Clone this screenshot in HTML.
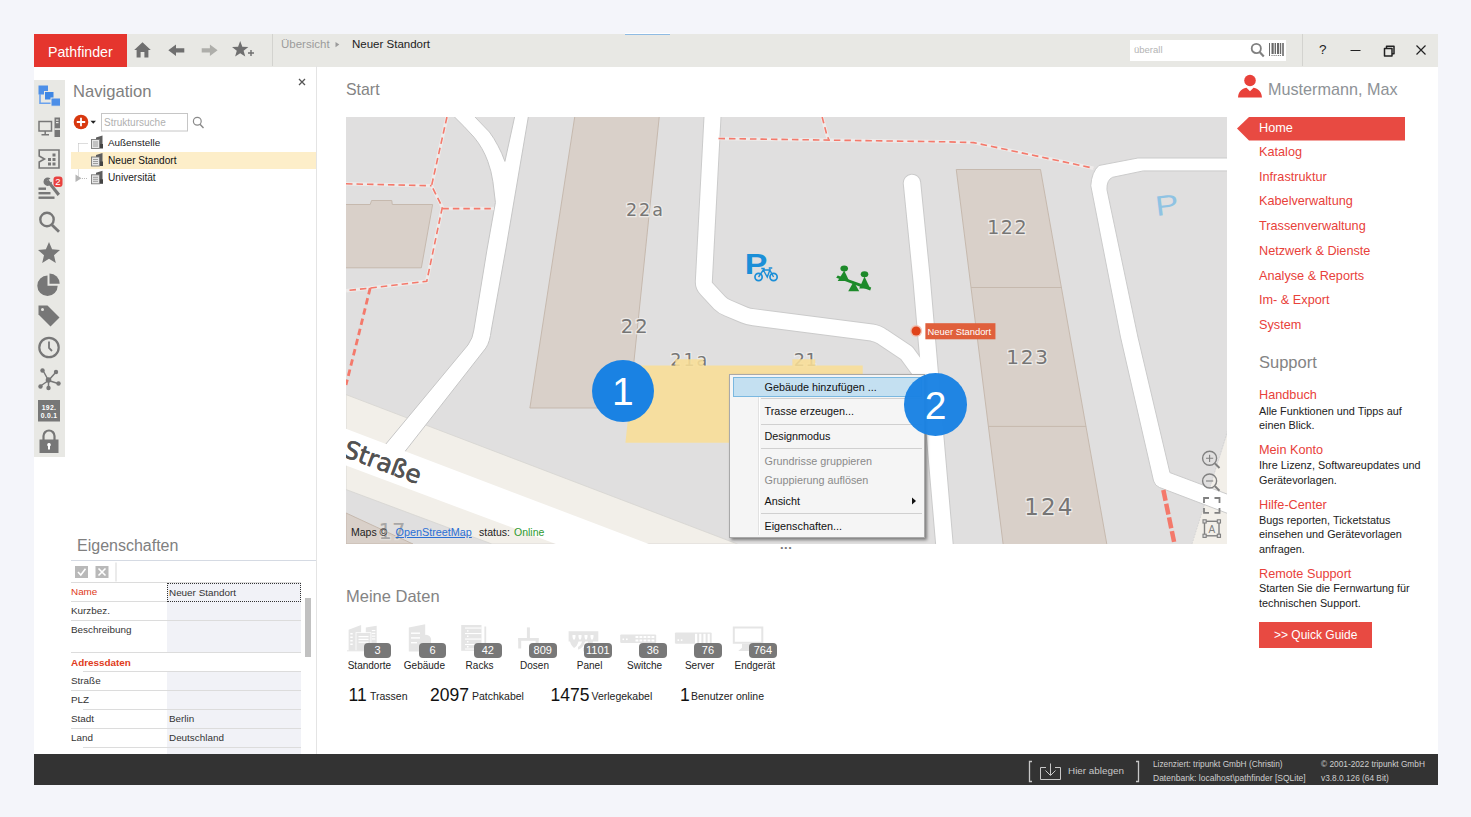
<!DOCTYPE html>
<html lang="de">
<head>
<meta charset="utf-8">
<title>Pathfinder</title>
<style>
*{box-sizing:border-box;margin:0;padding:0}
html,body{width:1471px;height:817px;overflow:hidden;background:#f4f5fa;font-family:"Liberation Sans",sans-serif;color:#222}
.a{position:absolute}
.t{position:absolute;white-space:nowrap;line-height:1}
#win{position:absolute;left:34px;top:34px;width:1404px;height:751px;background:#fff}
#titlebar{position:absolute;left:34px;top:34px;width:1404px;height:32.600px;background:#e8e8e4}
#brand{position:absolute;left:34px;top:34px;width:92.500px;height:32.600px;background:#e5352e}
#strip{position:absolute;left:34px;top:80px;width:31px;height:377px;background:#e8e8e4}
#status{position:absolute;left:34px;top:754px;width:1404px;height:31px;background:#333}
.h1{font-size:18px;color:#6a6a6a;font-weight:400}
.red{color:#e8413a}
.mi{font-size:12.700px;color:#e8413a}
.sd{font-size:10.850px;color:#222;line-height:14.5px;white-space:nowrap}
.pl{font-size:11px;color:#333}
.rowline{position:absolute;height:1px;background:#dcdcdc}
.cm{font-size:10.800px;color:#111}
.cmd{font-size:10.800px;color:#8a8a8a}
.sep{position:absolute;height:1px;background:#d0d0d0;left:31px;width:161px}
.lbl{font-size:10px;color:#222;text-align:center;width:60px}
.badge{position:absolute;height:15px;width:27.500px;border-radius:4px;background:#787878;color:#fff;font-size:11px;text-align:center;line-height:15px}
.st{font-size:10px;color:#cfcfcf}
</style>
</head>
<body>
<div id="win"></div>
<div id="titlebar"></div>
<div id="brand"></div>
<div class="a" style="left:625px;top:33px;width:44.500px;height:1px;background:#fff"></div>
<div class="a" style="left:625px;top:34px;width:44.500px;height:1px;background:#8fbbe3"></div>
<div class="t" style="left:48px;top:44.800px;font-size:14.200px;color:#fff">Pathfinder</div>

<svg class="a" style="left:126px;top:34px" width="320" height="32" viewBox="0 0 320 32">
<g fill="#6f6f6f">
<path d="M16.5 8.2 L8.2 16 L10.6 16 L10.6 23.5 L14.6 23.5 L14.6 18 L18.4 18 L18.4 23.5 L22.4 23.5 L22.4 16 L24.8 16 Z"/>
<path d="M42.3 16.3 L50 10.6 L50 14.2 L58.3 14.2 L58.3 18.6 L50 18.6 L50 22 Z"/>
<path d="M114.20 7.00 L116.32 12.69 L122.38 12.94 L117.62 16.71 L119.25 22.56 L114.20 19.20 L109.15 22.56 L110.78 16.71 L106.02 12.94 L112.08 12.69 Z"/>
<path d="M124.300 16 h1.400 v2.300 h2.300 v1.400 h-2.300 v2.300 h-1.400 v-2.300 h-2.300 v-1.400 h2.300z"/>
</g>
<path fill="#aeaeaa" d="M91.6 16.3 L83.9 10.6 L83.9 14.2 L75.7 14.2 L75.7 18.6 L83.9 18.6 L83.9 22 Z"/>
<rect x="146" y="0" width="1" height="32" fill="#d3d3cf"/>
<path fill="#9a9a9a" d="M209.5 8 L213.3 10.6 L209.5 13.2Z"/>
</svg>
<div class="t" style="left:281px;top:39px;font-size:11.5px;color:#9b9b9b">Übersicht</div>
<div class="t" style="left:352px;top:39px;font-size:11.5px;color:#222">Neuer Standort</div>
<div class="a" style="left:1130px;top:40px;width:156px;height:20.500px;background:#fff"></div>
<div class="t" style="left:1134px;top:45px;font-size:9.5px;color:#b4b4b4">überall</div>
<svg class="a" style="left:1250px;top:38px" width="40" height="24" viewBox="0 0 40 24">
<circle cx="6.300" cy="10.500" r="4.600" fill="none" stroke="#808080" stroke-width="1.800"/>
<path d="M9.600 14 L13.800 18.400" stroke="#808080" stroke-width="2.200" fill="none"/>
<g fill="#6a6a6a"><rect x="19" y="5" width="1" height="13"/><rect x="21.5" y="5" width="2.2" height="11"/><rect x="24.6" y="5" width="1.4" height="11"/><rect x="27" y="5" width="2.2" height="11"/><rect x="30" y="5" width="1.2" height="11"/><rect x="32.2" y="5" width="1.6" height="13"/>
<rect x="21.5" y="17" width="1" height="1"/><rect x="23.6" y="17" width="1" height="1"/><rect x="25.6" y="17" width="1" height="1"/><rect x="27.8" y="17" width="1" height="1"/><rect x="29.8" y="17" width="1" height="1"/></g>
</svg>
<div class="a" style="left:1302px;top:34px;width:1px;height:32px;background:#d3d3cf"></div>
<div class="t" style="left:1319px;top:43px;font-size:13.500px;color:#222">?</div>
<svg class="a" style="left:1340px;top:38px" width="96" height="24" viewBox="0 0 96 24">
<path d="M10.5 12.5 H20.5" stroke="#222" stroke-width="1" fill="none"/>
<path d="M44.5 10.5 h7.5 v7.5 h-7.5z M46.5 10.3 v-2 h7.5 v7.5 h-2" stroke="#222" stroke-width="1.5" fill="none" stroke-linejoin="round"/>
<path d="M76.5 7.5 L85.5 16.5 M85.5 7.5 L76.5 16.5" stroke="#222" stroke-width="1.2" fill="none"/>
</svg>


<!-- LEFT-STRIP -->
<div id="strip"></div>
<svg class="a" style="left:34px;top:80px" width="30" height="377" viewBox="0 0 30 377">
<!-- blue structure icon  center y=15.5 -->
<g>
<rect x="4.5" y="5.5" width="9.5" height="9" fill="#4d8fe8"/>
<path d="M6 14 V23.3 H18" stroke="#6aa2ee" stroke-width="1.6" fill="none"/>
<rect x="10.5" y="11.5" width="9.5" height="8.5" fill="#3e86e4" stroke="#e8e8e4" stroke-width="1"/>
<rect x="17" y="18" width="9.5" height="8.2" fill="#4d8fe8" stroke="#e8e8e4" stroke-width="1"/>
</g>
<!-- monitor + tower center y=47 -->
<g fill="none" stroke="#777" stroke-width="1.5">
<rect x="5" y="41.5" width="12.5" height="9.5"/>
<path d="M11.2 51 V54 M7.5 54.8 H15"/>
</g>
<rect x="20.5" y="37.5" width="5.5" height="19.5" fill="#777"/>
<rect x="22" y="39.5" width="2.5" height="1.2" fill="#e8e8e4"/><rect x="22" y="42" width="2.5" height="1.2" fill="#e8e8e4"/><rect x="20.5" y="48.3" width="5.5" height="1.6" fill="#e8e8e4"/>
<!-- floor plan center y=78.5 -->
<path d="M5.2 70 H25 V88 H5.2 V82 L10.5 79 L5.2 76 Z" fill="none" stroke="#777" stroke-width="1.6"/>
<g fill="#777"><rect x="18.5" y="73.5" width="3" height="3"/><rect x="14" y="78" width="3" height="3"/><rect x="18.5" y="78" width="3" height="3"/><rect x="14" y="82.500" width="3" height="3"/><rect x="18.5" y="82.5" width="3" height="3"/></g>
<!-- tools center y=110 -->
<g fill="#777">
<rect x="4.5" y="107.5" width="7.5" height="2.4"/><rect x="4.500" y="112" width="12" height="2.4"/><rect x="4.500" y="116.5" width="16" height="2.4"/>
<path d="M12.3 101.5 L14.6 99.8 L26 113.8 L23.6 116 Z"/>
<path d="M9.5 101.5 a4.2 4.2 0 0 1 7 -3 l-3.3 2.3 l1.6 2.6 l3.300 -1.6 a4.2 4.2 0 0 1 -8.6 -0.300z"/>
</g>
<rect x="19.500" y="96.500" width="9" height="10.500" rx="3" fill="#e8413f"/>
<text x="24" y="105" font-family="Liberation Sans,sans-serif" font-size="9.500" fill="#fff" text-anchor="middle">2</text>
<!-- search center y=141.5 -->
<circle cx="13" cy="139.5" r="6.700" fill="none" stroke="#777" stroke-width="2.4"/>
<path d="M17.800 144.700 L25 151.700" stroke="#777" stroke-width="2.800" fill="none"/>
<!-- star center y=173 -->
<path fill="#777" d="M15 162 L18.100 169.300 L26 170 L20 175.200 L21.800 183 L15 178.800 L8.200 183 L10 175.200 L4 170 L11.900 169.300 Z"/>
<!-- pie center y=204 -->
<path fill="#777" d="M13.500 195.500 V205.700 H23.700 A10.200 10.200 0 1 1 13.500 195.500 Z"/>
<path fill="#777" d="M15.500 193.500 A10.200 10.200 0 0 1 25.700 203.700 H15.500 Z"/>
<!-- tag center y=235.5 -->
<path fill="#777" d="M4.500 225.500 H13.500 L25.500 237.500 L16.500 246.500 L4.500 234.500 Z"/>
<circle cx="8.500" cy="229.500" r="1.500" fill="#e8e8e4"/>
<!-- clock center y=267.500 -->
<circle cx="15" cy="267.500" r="9.700" fill="none" stroke="#777" stroke-width="2.200"/>
<path d="M15 261.500 V268 L18 271" stroke="#777" stroke-width="1.800" fill="none"/>
<!-- network center y=299 -->
<g stroke="#777" stroke-width="1.500" fill="none"><path d="M14.500 300.500 L9 290.500 M14.500 300.500 L22 292 M14.500 300.500 L24 303.500 M14.500 300.500 L14.500 307.500 M14.500 300.500 L6.500 306"/></g>
<g fill="#777"><circle cx="14.500" cy="300" r="2.800"/><circle cx="8.500" cy="290.500" r="2.200"/><circle cx="22" cy="292" r="2.200"/><circle cx="24.500" cy="303.500" r="2.200"/><circle cx="14.500" cy="308" r="2.200"/><circle cx="6.500" cy="306.500" r="2.200"/></g>
<!-- ip center y=330.500 -->
<rect x="4" y="320" width="22" height="21.500" fill="#777"/>
<text x="15" y="329.500" font-family="Liberation Sans,sans-serif" font-size="6.800" font-weight="bold" fill="#fff" text-anchor="middle" letter-spacing="0.300">192.</text>
<text x="15" y="338" font-family="Liberation Sans,sans-serif" font-size="6.800" font-weight="bold" fill="#fff" text-anchor="middle" letter-spacing="0.300">0.0.1</text>
<!-- lock center y=361.500 -->
<path d="M9.500 360 V356 A5.500 5.500 0 0 1 20.500 356 V360" stroke="#777" stroke-width="2.200" fill="none"/>
<rect x="5.500" y="359.500" width="19" height="13.500" fill="#777"/>
<path d="M15 363 a1.800 1.800 0 0 1 1 3.300 v3.200 h-2 v-3.200 a1.800 1.800 0 0 1 1 -3.300z" fill="#fff"/>
</svg>

<div class="t h1" style="left:73px;top:83.500px;font-size:16.600px;font-weight:300;color:#808080">Navigation</div>
<svg class="a" style="left:297px;top:77px" width="10" height="10" viewBox="0 0 10 10"><path d="M2 2 L8 8 M8 2 L2 8" stroke="#555" stroke-width="1.300" fill="none"/></svg>
<div class="a" style="left:316px;top:66px;width:1px;height:689px;background:#e4e4e4"></div>
<svg class="a" style="left:70px;top:110px" width="140" height="80" viewBox="0 0 140 80">
<circle cx="11" cy="12" r="7.300" fill="#d8380f"/>
<path d="M11 7.800 V16.200 M6.800 12 H15.200" stroke="#fff" stroke-width="1.800"/>
<path d="M20.500 10.800 H26 L23.250 13.800 Z" fill="#222"/>
<rect x="31.500" y="3.500" width="86" height="17.500" fill="#fff" stroke="#c6c6c6"/>
<circle cx="127.300" cy="11.300" r="3.900" fill="none" stroke="#8a8a8a" stroke-width="1.200"/>
<path d="M130 14.200 L133.500 18" stroke="#8a8a8a" stroke-width="1.400"/>
<g stroke="#bbb" stroke-width="1" stroke-dasharray="1 1" fill="none"><path d="M8.500 33.500 V68 M8.500 33.500 H18 M8.500 50.500 H18 M12 68.500 H18"/></g>
<path d="M5.500 64.500 L11.500 68.300 L5.500 72 Z" fill="#b5b5b5"/>
</svg>
<div class="t" style="left:104px;top:118px;font-size:10px;color:#b0b0b0">Struktursuche</div>
<div class="a" style="left:71px;top:152px;width:245px;height:17px;background:#fdeec9"></div>
<svg class="a" style="left:90px;top:134px" width="16" height="56" viewBox="0 0 16 56">
<g id="bld"><path d="M6 3.500 L12.500 1.500 V13.500 H6 Z" fill="#5e5e5e"/><rect x="1.500" y="5.500" width="8" height="9" fill="#e6e6e6" stroke="#7a7a7a" stroke-width="0.900"/><path d="M3 8 H8 M3 10 H8 M3 12 H8" stroke="#8a8a8a" stroke-width="0.800"/><rect x="10" y="10" width="3" height="4.500" fill="#444"/></g>
<use href="#bld" y="17.500"/><use href="#bld" y="35.300"/>
</svg>
<div class="t" style="left:108px;top:138px;font-size:9.900px;color:#222">Außenstelle</div>
<div class="t" style="left:108px;top:155.500px;font-size:10.100px;color:#111">Neuer Standort</div>
<div class="t" style="left:108px;top:173px;font-size:10.100px;color:#222">Universität</div>


<div class="t h1" style="left:77px;top:538px;font-size:16px;font-weight:300;color:#808080">Eigenschaften</div>
<div class="a" style="left:71px;top:560px;width:245px;height:1px;background:#d5dae3"></div>
<svg class="a" style="left:70px;top:562px" width="50" height="20" viewBox="0 0 50 20">
<rect x="5" y="4" width="13" height="12" fill="#b9b9b9"/><path d="M8 10 L10.800 13 L15.500 6.800" stroke="#fff" stroke-width="1.600" fill="none"/>
<rect x="25.500" y="4" width="13" height="12" fill="#b9b9b9"/><path d="M28.500 6.500 L35.500 13.500 M35.500 6.500 L28.500 13.500" stroke="#fff" stroke-width="1.600" fill="none"/>
<rect x="45.500" y="0.500" width="1" height="19" fill="#d8d8d8"/>
</svg>
<div class="a" style="left:167px;top:583px;width:134px;height:172px;background:#f1f2f7"></div>
<div class="a" style="left:167px;top:653px;width:134px;height:19px;background:#fff"></div>
<div class="rowline" style="left:71px;top:582px;width:230px"></div>
<div class="rowline" style="left:71px;top:601px;width:230px"></div>
<div class="rowline" style="left:71px;top:620px;width:230px"></div>
<div class="rowline" style="left:71px;top:652px;width:230px"></div>
<div class="rowline" style="left:83px;top:671px;width:218px"></div>
<div class="rowline" style="left:71px;top:690px;width:230px"></div>
<div class="rowline" style="left:83px;top:709px;width:218px"></div>
<div class="rowline" style="left:71px;top:728px;width:230px"></div>
<div class="rowline" style="left:83px;top:747px;width:218px"></div>
<div class="a" style="left:167px;top:583px;width:134px;height:19px;border:1px dotted #333;background:#f1f2f7"></div>
<div class="t pl" style="left:71px;top:587px;color:#e03a20;font-size:9.900px">Name</div>
<div class="t pl" style="left:169px;top:587.500px;font-size:9.900px">Neuer Standort</div>
<div class="t pl" style="left:71px;top:606px;font-size:9.900px">Kurzbez.</div>
<div class="t pl" style="left:71px;top:625px;font-size:9.900px">Beschreibung</div>
<div class="t pl" style="left:71px;top:657.500px;color:#e03a20;font-weight:bold;font-size:9.900px">Adressdaten</div>
<div class="t pl" style="left:71px;top:676px;font-size:9.900px">Straße</div>
<div class="t pl" style="left:71px;top:695px;font-size:9.900px">PLZ</div>
<div class="t pl" style="left:71px;top:713.500px;font-size:9.900px">Stadt</div>
<div class="t pl" style="left:169px;top:714px;font-size:9.900px">Berlin</div>
<div class="t pl" style="left:71px;top:732.500px;font-size:9.900px">Land</div>
<div class="t pl" style="left:169px;top:733px;font-size:9.900px">Deutschland</div>
<div class="a" style="left:305px;top:598px;width:6px;height:59px;background:#c1c1c1"></div>


<div class="t h1" style="left:346px;top:82px;font-size:15.900px;color:#848484">Start</div>
<div class="t h1" style="left:346px;top:588px;font-size:16.500px;color:#848484">Meine Daten</div>
<div class="t" style="left:780px;top:538px;font-size:13px;color:#777;letter-spacing:0.500px;font-weight:bold">...</div>


<svg class="a" id="map" style="left:345.500px;top:116.800px" width="881.500" height="427" preserveAspectRatio="none" viewBox="0 0 882 427">
<defs><clipPath id="mc"><rect x="0" y="0" width="882" height="427"/></clipPath></defs>
<g clip-path="url(#mc)">
<rect x="0" y="0" width="882" height="427" fill="#e0dfdf"/>
<!-- street band -->
<polygon points="0,277.600 391.600,427 146,427 0,372.500" fill="#f2efe9" stroke="#d6d4d0" stroke-width="0.800"/>
<polygon points="883,313.700 846.500,427 883,427" fill="#f2efe9"/>
<path d="M882,313.700 L846.500,427" stroke="#cfcfcf" stroke-width="0.800" stroke-dasharray="1.500 1.500" fill="none"/>
<polygon points="0,396 67,427 0,427" fill="#d9d0c9" stroke="#c6b9ae" stroke-width="1"/>
<g id="roads-casing" fill="none" stroke="#cbcbcb" stroke-linejoin="round" stroke-linecap="butt">
<path d="M366.800,-2 L358,165 Q358,169 361,172 L374,186 Q377,189 382,191 L398.500,198 Q402,199.500 408,200.300 L526,215.500 Q532,216.500 537,220 L561,236 L580,262" stroke-width="18"/>
<path d="M566.300,66 L576,163 L599,430" stroke-width="18.500" stroke-linecap="round"/>
</g>
<g id="roads" fill="none" stroke="#fff" stroke-linejoin="round" stroke-linecap="butt">
<path d="M366.800,-2 L358,165 Q358,169 361,172 L374,186 Q377,189 382,191 L398.500,198 Q402,199.500 408,200.300 L526,215.500 Q532,216.500 537,220 L561,236 L580,262" stroke-width="16"/>
<path d="M566.300,66 L576,163 L599,430" stroke-width="16.500" stroke-linecap="round"/>
</g>
<path d="M883,41 L792.400,41 L753.300,48.500 Q746,55 745.200,68.700 L774.900,220 L808,364 Q809.500,369 814,370.500 L883,396.800 L883,377.600 L824.400,355.600 L792.400,220 L761.400,72.700 Q761,63 767,60.300 L797.800,53.900 L883,53.900 Z" fill="#fff" stroke="#cbcbcb" stroke-width="1" stroke-linejoin="round"/>
<path d="M107.600,-1 Q118,9 128.100,20.200 Q137,31 141.800,44.200 Q145.500,54 147,64.800 L149.500,85.500 L141,133 L127.900,213 Q127,221 122,228 L30.200,338.700 L50.500,345.400 L140,231 Q144,225 145.400,213 L159.800,133 L182.600,-1 L168.900,-1 L159,44.400 Q156,36 152.100,28.800 Q148,21 143.500,15 L128.100,-1 Z" fill="#fff" stroke="#c6c6c6" stroke-width="1" stroke-linejoin="round"/>
<polygon points="0,311.800 303,427 210,427 0,348.500" fill="#fff"/>
<!-- buildings -->
<g fill="#d9d0c9" stroke="#c6b9ae" stroke-width="1">
<polygon points="-1,87.500 24.200,87.500 25.600,83.500 45.800,83.500 46.300,87.500 86.700,87.500 75.400,150.800 -1,150.800"/>
<polygon points="229,-1 313.500,-1 287.700,248.400 283.200,291 184,291"/>
<polygon points="610.600,52.500 694.900,52.500 761.400,428 657.600,428"/>
<path d="M625.400,170.500 L715.800,170.500 M642.800,309.400 L740.500,309.400" fill="none"/>
</g>

<!-- footpaths -->
<g fill="none" stroke="#f4f0ee" stroke-width="3.500" opacity="0.700">
<path d="M101,0 L85.600,68.700 L96.400,90.200 L80.800,164.300 L24.200,171 L0,173.700 M0,66.800 L85.600,68.700 M96.400,91.600 L148,91.600 M372.700,21.500 L600,24.800 L628,25.600 L748,51.200 M476.400,0 L481,17.500 L483,22.500"/>
</g>
<g fill="none" stroke="#f4796b" stroke-width="1.600" stroke-dasharray="6.500 4">
<path d="M101,0 L85.600,68.700 L96.400,90.200 L80.800,164.300 L24.200,171 L0,173.700"/>
<path d="M0,66.800 L85.600,68.700"/>
<path d="M96.400,91.600 L148,91.600"/>
<path d="M372.700,21.500 L600,24.800 L628,25.600 L748,51.200"/>
<path d="M476.400,0 L481,17.500 L483,22.500"/>
<path d="M24.200,171 L12.100,220 L0,268" stroke-width="2.800"/>
<path d="M817.800,373 L829,427" stroke-width="4.500" stroke-dasharray="11 3"/>
</g>
<!-- icons -->
<g>
<text x="0" y="0" font-family="Liberation Sans,sans-serif" font-weight="bold" font-size="29.500" fill="#1b8fd8" transform="translate(399 156.600) scale(1.150 1)">P</text>
<g fill="none" stroke="#1b8fd8" stroke-width="1.700"><circle cx="412.800" cy="160" r="3.600"/><circle cx="427.800" cy="160" r="3.600"/><path d="M412.800,160 L417.500,153 H424 L427.800,160 M417.500,153 L421.500,160 L424.500,152 M415.500,151.500 H419 M423,151 H426.500" stroke-width="1.400"/></g>
</g>
<g fill="#1d8a2a">
<ellipse cx="498.500" cy="151.500" rx="3.800" ry="3"/><path d="M498.500,153.500 L503.500,164 H492 Z"/>
<ellipse cx="518.800" cy="157.200" rx="3.800" ry="3"/><path d="M518.800,159.500 L524.500,171.500 H513.500 Z"/>
<path d="M490.500,160.800 L492,158.500 L525.500,170.500 L524.500,173.500 Z"/><path d="M508,164.500 L513.500,174.300 H502.500 Z"/>
</g>
<text x="0" y="0" font-family="Liberation Sans,sans-serif" font-size="28" fill="#8fc3e3" transform="translate(811 99) rotate(-7) scale(1.250 1)">P</text>
<!-- house numbers -->
<g font-family="DejaVu Sans,Liberation Sans,sans-serif" font-size="17.500" letter-spacing="2" fill="#6c6c6c" stroke="#efedeb" stroke-width="2.500" paint-order="stroke" text-anchor="middle" opacity="0.900">
<text x="299.600" y="99">22a</text>
<text x="289.300" y="216.500" font-size="19.500">22</text>
<text x="344" y="249.500">21a</text>
<text x="459.700" y="249.300" letter-spacing="0.500">21</text>
<text x="662" y="117.500" font-size="19" letter-spacing="1.500">122</text>
<text x="682.300" y="247" font-size="20" letter-spacing="1.800">123</text>
<text x="703.800" y="398.500" font-size="23" letter-spacing="2.200">124</text>
<text x="46" y="422" font-size="21" letter-spacing="0" fill="#a2a2a2" stroke="#e4e0dc">17</text>
</g>
<polygon points="287.700,248.400 329.500,248.400 329.500,242.300 357.700,242.300 357.700,248.400 446.600,248.400 446.600,242.300 469.500,242.300 469.500,248.400 517,248.400 517,325.700 279.600,325.700" fill="#f8de96" opacity="0.880"/>
<g font-family="DejaVu Sans,Liberation Sans,sans-serif" font-size="24.500" transform="rotate(20.500 -4 339)" opacity="0.920"><text x="-4" y="339" fill="#444" stroke="#fff" stroke-width="3.500" paint-order="stroke">Straße</text><text x="-4" y="339" fill="#444" stroke="#444" stroke-width="0.500">Straße</text></g>
<!-- marker -->
<circle cx="570.500" cy="214" r="6" fill="#f0b8a8" opacity="0.800"/>
<circle cx="570.500" cy="214" r="4.600" fill="#e0431a"/>
<rect x="579.700" y="206.200" width="70.100" height="16.100" fill="#e0603c"/>
</g>
</svg>
<div class="t" style="left:927.500px;top:326.500px;font-size:9.400px;color:#fff">Neuer Standort</div>
<div class="t" style="left:351px;top:526.500px;font-size:10.500px;color:#222">Maps ©</div>
<div class="t" style="left:395.600px;top:526.500px;font-size:10.800px;color:#2a6fd6;text-decoration:underline">OpenStreetMap</div>
<div class="t" style="left:479px;top:526.500px;font-size:10.500px;color:#222">status:</div>
<div class="t" style="left:514px;top:526.500px;font-size:10.500px;color:#2e9a2e">Online</div>
<svg class="a" style="left:1198px;top:446px" width="28" height="96" viewBox="0 0 28 96" fill="none" stroke="#808080" stroke-width="1.400">
<circle cx="11.600" cy="12.300" r="7"/><path d="M8 12.300 H15.200 M11.600 8.700 V15.900" stroke-width="1.100"/><path d="M17 17.500 L21.500 22" stroke-width="2"/>
<circle cx="11.600" cy="35" r="7"/><path d="M8 35 H15.200" stroke-width="1.100"/><path d="M17 40.200 L21.500 44.700" stroke-width="2"/>
<path d="M6 57 V52 H11 M16.500 52 H21.500 V57 M21.500 62 V66.800 H16.500 M11 66.800 H6 V62" stroke-width="1.800"/>
<rect x="6.500" y="75.300" width="14.500" height="14.500"/>
<g fill="#e0dfdf" stroke-width="1.100"><rect x="5" y="73.800" width="3.200" height="3.200"/><rect x="19.300" y="73.800" width="3.200" height="3.200"/><rect x="5" y="88.200" width="3.200" height="3.200"/><rect x="19.300" y="88.200" width="3.200" height="3.200"/></g>
<text x="13.800" y="86.500" font-family="Liberation Sans,sans-serif" font-size="10" fill="#808080" stroke="none" text-anchor="middle">A</text>
</svg>


<svg class="a" style="left:1236px;top:72px" width="28" height="28" viewBox="0 0 28 28">
<circle cx="14" cy="8.500" r="5.800" fill="#e8413a"/>
<path d="M2 25.500 C2.500 18.500 7 16.500 10.500 15.800 L14 19.300 L17.500 15.800 C21 16.500 25.500 18.500 26 25.500 Z" fill="#e8413a"/>
</svg>
<div class="t" style="left:1268px;top:81px;font-size:16.200px;color:#8e9296">Mustermann, Max</div>
<svg class="a" style="left:1236px;top:115.500px" width="170" height="26" viewBox="0 0 170 26"><path d="M1 12.500 L13 1 H169 V24.500 H13 Z" fill="#e84a42"/></svg>
<div class="t mi" style="left:1259px;top:121.800px;color:#fff">Home</div>
<div class="t mi" style="left:1259px;top:146px">Katalog</div>
<div class="t mi" style="left:1259px;top:170.800px">Infrastruktur</div>
<div class="t mi" style="left:1259px;top:195.400px">Kabelverwaltung</div>
<div class="t mi" style="left:1259px;top:220px">Trassenverwaltung</div>
<div class="t mi" style="left:1259px;top:244.700px">Netzwerk &amp; Dienste</div>
<div class="t mi" style="left:1259px;top:269.500px">Analyse &amp; Reports</div>
<div class="t mi" style="left:1259px;top:294.200px">Im- &amp; Export</div>
<div class="t mi" style="left:1259px;top:318.700px">System</div>
<div class="t h1" style="left:1259px;top:354px;font-size:16.500px;color:#848484">Support</div>
<div class="t mi" style="left:1259px;top:388.500px">Handbuch</div>
<div class="a sd" style="left:1259px;top:403.500px">Alle Funktionen und Tipps auf<br>einen Blick.</div>
<div class="t mi" style="left:1259px;top:444px">Mein Konto</div>
<div class="a sd" style="left:1259px;top:458px">Ihre Lizenz, Softwareupdates und<br>Gerätevorlagen.</div>
<div class="t mi" style="left:1259px;top:498.500px">Hilfe-Center</div>
<div class="a sd" style="left:1259px;top:512.500px">Bugs reporten, Ticketstatus<br>einsehen und Gerätevorlagen<br>anfragen.</div>
<div class="t mi" style="left:1259px;top:567.500px">Remote Support</div>
<div class="a sd" style="left:1259px;top:581px">Starten Sie die Fernwartung für<br>technischen Support.</div>
<div class="a" style="left:1259px;top:622px;width:113px;height:25.500px;background:#e84a42"></div>
<div class="t" style="left:1274px;top:629px;font-size:12px;color:#fff">&gt;&gt; Quick Guide</div>


<svg class="a" style="left:340px;top:618px" width="450" height="40" viewBox="0 0 450 40">
<g fill="#e5e5e5">
<!-- standorte -->
<path d="M8.600,11.700 L21.100,7 V32.800 H8.600Z"/><path d="M25.800,9.400 L36.700,7.800 V32.800 H25.800Z"/>
<rect x="15.600" y="14.200" width="15.700" height="18.600" fill="#fff"/><rect x="16.400" y="14.900" width="14.100" height="17.900"/>
<rect x="7" y="32.300" width="32" height="1"/>
<g fill="#fff"><rect x="10.300" y="15" width="2.400" height="1.500"/><rect x="10.300" y="18.500" width="2.400" height="1.500"/><rect x="10.300" y="22" width="2.400" height="1.500"/><rect x="10.300" y="25.500" width="2.400" height="1.500"/>
<rect x="18.500" y="18" width="10" height="1.200"/><rect x="18.500" y="20.800" width="10" height="1.200"/><rect x="18.500" y="23.600" width="10" height="1.200"/>
<rect x="31.800" y="12" width="3.500" height="1.100"/><rect x="31.800" y="14.800" width="3.500" height="1.100"/><rect x="31.800" y="17.600" width="3.500" height="1.100"/><rect x="31.800" y="20.400" width="3.500" height="1.100"/></g>
<!-- gebaeude -->
<path d="M68.800,9.400 L85.200,6.300 V33.600 H68.800Z"/><circle cx="86" cy="21.900" r="5.200"/><rect x="81" y="22" width="10" height="11.600"/>
<g fill="#fff"><rect x="71" y="14.500" width="9" height="1.400"/><rect x="71" y="19.200" width="9" height="1.400"/><rect x="71" y="24" width="6" height="1.400"/></g>
<!-- racks -->
<rect x="121.200" y="7" width="20.300" height="25.800"/><rect x="144.400" y="8.500" width="1.800" height="24.300"/>
<g fill="#fff"><rect x="125" y="9.500" width="16.500" height="1.100"/><rect x="125" y="15" width="16.500" height="1.100"/><rect x="125" y="20.500" width="16.500" height="1.100"/><rect x="125" y="26" width="16.500" height="1.100"/><rect x="125" y="30.500" width="16.500" height="1"/>
<rect x="127" y="12.200" width="1.500" height="1.500"/><rect x="127" y="17.500" width="1.500" height="1.500"/><rect x="127" y="23" width="1.500" height="1.500"/><rect x="127" y="28" width="1.500" height="1.500"/></g>
<!-- dosen -->
<rect x="186.900" y="9.400" width="3" height="11"/><rect x="178.200" y="20" width="20.400" height="2.800"/><rect x="178.200" y="20" width="3" height="10.500"/><rect x="195.600" y="20" width="3" height="10.500"/>
<!-- panel -->
<path d="M228.600,13.300 H258.300 V23.500 H253 C252,29 248,33 243,33.500 L243,30 C245.500,29.500 247.500,27 248,23.500 H245 C244,28 241,31 238,31.500 V29 C240,28 241.500,26 242,23.500 H238.500 C237.500,27 236,29 234,30 C232,28 230.500,26 230,23.500 H228.600Z"/>
<g fill="#fff"><path d="M232.500,17 h3 v2 l-0.700,2.500 h-1.600 l-0.700,-2.500z M238.500,17 h3 v2 l-0.700,2.500 h-1.600 l-0.700,-2.500z M244.500,17 h3 v2 l-0.700,2.500 h-1.600 l-0.700,-2.500z M250.500,17 h3 v2 l-0.700,2.500 h-1.600 l-0.700,-2.500z"/></g>
<!-- switche -->
<rect x="280.200" y="16.400" width="36" height="8.600" rx="1.200"/>
<g fill="#fff"><rect x="282.500" y="20.500" width="1.600" height="1.600"/><rect x="286" y="20.500" width="1.600" height="1.600"/>
<rect x="295.500" y="18" width="2.800" height="2"/><rect x="299.500" y="18" width="2.800" height="2"/><rect x="303.500" y="18" width="2.800" height="2"/><rect x="307.500" y="18" width="2.800" height="2"/><rect x="311.500" y="18" width="2.800" height="2"/>
<rect x="295.500" y="21.500" width="2.800" height="2"/><rect x="299.500" y="21.500" width="2.800" height="2"/><rect x="303.500" y="21.500" width="2.800" height="2"/><rect x="307.500" y="21.500" width="2.800" height="2"/><rect x="311.500" y="21.500" width="2.800" height="2"/></g>
<!-- server -->
<rect x="334.900" y="14.400" width="36.800" height="11.400" rx="1.200"/>
<g fill="#fff"><rect x="337.500" y="21.300" width="1.600" height="1.600"/><rect x="340.800" y="21.300" width="1.600" height="1.600"/>
<rect x="355" y="15.800" width="2.200" height="10"/><rect x="359.200" y="15.800" width="2.200" height="10"/><rect x="363.400" y="15.800" width="2.200" height="10"/><rect x="367.600" y="15.800" width="2.200" height="10"/></g>
<!-- endgeraet -->
<path d="M392.800,8.600 H423.300 V25.800 H392.800Z M394.800,10.600 V23.800 H421.300 V10.600Z" fill-rule="evenodd"/>
<path d="M402,25.800 H410 L410,29.700 L412.500,33.100 H398.200 L402,29.700Z"/>
</g>
</svg>
<div class="badge" style="left:363.9px;top:643px">3</div>
<div class="t lbl" style="left:339.4px;top:661px">Standorte</div>
<div class="badge" style="left:418.9px;top:643px">6</div>
<div class="t lbl" style="left:394.4px;top:661px">Gebäude</div>
<div class="badge" style="left:474.0px;top:643px">42</div>
<div class="t lbl" style="left:449.5px;top:661px">Racks</div>
<div class="badge" style="left:529.0px;top:643px">809</div>
<div class="t lbl" style="left:504.5px;top:661px">Dosen</div>
<div class="badge" style="left:584.1px;top:643px">1101</div>
<div class="t lbl" style="left:559.6px;top:661px">Panel</div>
<div class="badge" style="left:639.1px;top:643px">36</div>
<div class="t lbl" style="left:614.6px;top:661px">Switche</div>
<div class="badge" style="left:694.2px;top:643px">76</div>
<div class="t lbl" style="left:669.7px;top:661px">Server</div>
<div class="badge" style="left:749.2px;top:643px">764</div>
<div class="t lbl" style="left:724.8px;top:661px">Endgerät</div>
<div class="t" style="left:348.5px;top:687px;font-size:17.500px;color:#111">11</div>
<div class="t" style="left:370px;top:690.500px;font-size:10.500px;color:#222">Trassen</div>
<div class="t" style="left:430px;top:687px;font-size:17.500px;color:#111">2097</div>
<div class="t" style="left:472px;top:690.500px;font-size:10.500px;color:#222">Patchkabel</div>
<div class="t" style="left:550.5px;top:687px;font-size:17.500px;color:#111">1475</div>
<div class="t" style="left:591.5px;top:690.500px;font-size:10.500px;color:#222">Verlegekabel</div>
<div class="t" style="left:680px;top:687px;font-size:17.500px;color:#111">1</div>
<div class="t" style="left:691px;top:690.500px;font-size:10.500px;color:#222">Benutzer online</div>


<!-- STATUS -->
<div id="status"></div>
<svg class="a" style="left:1025px;top:758px" width="120" height="26" viewBox="0 0 120 26">
<path d="M7 3.500 H4.500 V23.500 H7 M111 3.500 H113.500 V23.500 H111" stroke="#c8c8c8" stroke-width="1.300" fill="none"/>
<path d="M21 9.500 H15.500 V21.500 H35.500 V9.500 H30" stroke="#c8c8c8" stroke-width="1" fill="none"/>
<path d="M25.500 5.500 V17 M20.500 12.500 L25.500 17.500 L30.500 12.500" stroke="#c8c8c8" stroke-width="1" fill="none"/>
</svg>
<div class="t" style="left:1068px;top:766px;font-size:9.900px;color:#c8c8c8">Hier ablegen</div>
<div class="t st" style="left:1153px;top:760px;font-size:8.300px">Lizenziert: tripunkt GmbH (Christin)</div>
<div class="t st" style="left:1153px;top:773.700px;font-size:8.500px">Datenbank: localhost\pathfinder [SQLite]</div>
<div class="t st" style="left:1321px;top:760px;font-size:8.300px">© 2001-2022 tripunkt GmbH</div>
<div class="t st" style="left:1321px;top:773.700px;font-size:8.300px">v3.8.0.126 (64 Bit)</div>

<div class="a" style="left:729px;top:373.500px;width:196px;height:164px;background:#f5f5f5;border:1px solid #a9a9a9;box-shadow:2px 2px 3px rgba(0,0,0,0.450)">
<div class="a" style="left:28px;top:2px;width:1px;height:158px;background:#e2e2e2"></div>
<div class="a" style="left:29px;top:2px;width:1px;height:158px;background:#fff"></div>
<div class="a" style="left:2.500px;top:2px;width:189px;height:20px;background:#c4e0f1;border:1px solid #7ab8e0"></div>
<div class="sep" style="top:23.500px"></div>
<div class="sep" style="top:49px"></div>
<div class="sep" style="top:73.500px"></div>
<div class="sep" style="top:138.500px"></div>
<div class="t cm" style="left:34.500px;top:7px">Gebäude hinzufügen ...</div>
<div class="t cm" style="left:34.500px;top:31px">Trasse erzeugen...</div>
<div class="t cm" style="left:34.500px;top:56px">Designmodus</div>
<div class="t cmd" style="left:34.500px;top:81px">Grundrisse gruppieren</div>
<div class="t cmd" style="left:34.500px;top:100.500px">Gruppierung auflösen</div>
<div class="t cm" style="left:34.500px;top:121px">Ansicht</div>
<div class="t cm" style="left:34.500px;top:146px">Eigenschaften...</div>
<svg class="a" style="left:181px;top:122px" width="6" height="8" viewBox="0 0 6 8"><path d="M1 0.500 L5 4 L1 7.500Z" fill="#111"/></svg>
</div>
<div class="a" style="left:591.500px;top:359.500px;width:62.500px;height:62.500px;border-radius:50%;background:#1a82e3"></div>
<div class="t" style="left:591.500px;top:372px;width:62.500px;text-align:center;font-size:39px;color:#fff">1</div>
<div class="a" style="left:904.200px;top:373.200px;width:62.700px;height:62.700px;border-radius:50%;background:#1a82e3;opacity:0.970"></div>
<div class="t" style="left:904.200px;top:385.500px;width:62.700px;text-align:center;font-size:39px;color:#fff">2</div>


</body>
</html>
